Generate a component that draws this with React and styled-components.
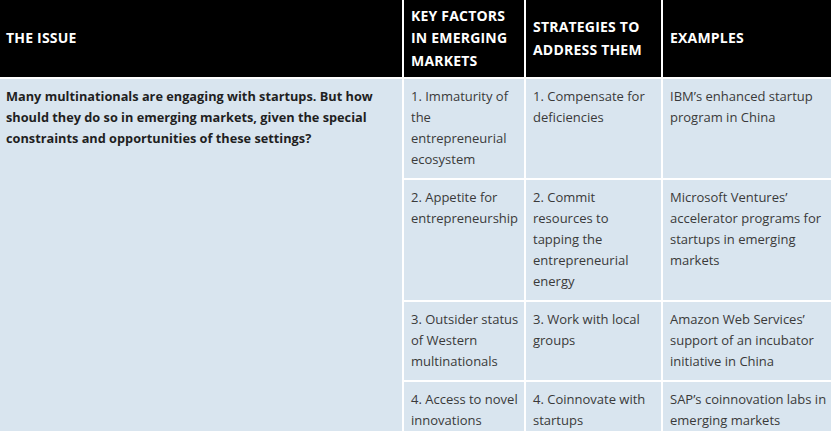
import styled, { createGlobalStyle } from "styled-components";

const GlobalStyle = createGlobalStyle`
  body {
    margin: 0;
    background: #fff;
    font-family: "Open Sans", "Liberation Sans", sans-serif;
  }
`;

const Table = styled.div`
  display: grid;
  grid-template-columns: 402px 120px 135px 1fr;
  gap: 2px;
  background: #fff;
  width: 831px;
`;

const Head = styled.div`
  background: #000;
  color: #fff;
  font-weight: 700;
  font-size: 14px;
  line-height: 22.5px;
  letter-spacing: 0.2px;
  text-transform: uppercase;
  padding: 4px 6px 4px ${(p) => (p.first ? "6px" : "7px")};
  display: flex;
  align-items: center;
  min-height: 69px;
`;

const Cell = styled.div`
  background: #d9e5ef;
  color: #3a3a3a;
  font-size: 13px;
  line-height: 21px;
  padding: 7px 4px 8px 7px;
`;

const IssueCell = styled(Cell)`
  grid-row: span 4;
  font-weight: 700;
  font-size: 12.75px;
  color: #1f1f1f;
  padding-left: 6px;
  padding-right: 20px;
`;

const rows = [
  ["1. Immaturity of the entrepreneurial ecosystem", "1. Compensate for deficiencies", "IBM’s enhanced startup program in China"],
  ["2. Appetite for entrepreneurship", "2. Commit resources to tapping the entrepreneurial energy", "Microsoft Ventures’ accelerator programs for startups in emerging markets"],
  ["3. Outsider status of Western multinationals", "3. Work with local groups", "Amazon Web Services’ support of an incubator initiative in China"],
  ["4. Access to novel innovations", "4. Coinnovate with startups", "SAP’s coinnovation labs in emerging markets"],
];

function App() {
  return (
    <>
      <GlobalStyle />
      <Table>
        <Head first>The issue</Head>
        <Head>Key factors in emerging markets</Head>
        <Head>Strategies to address them</Head>
        <Head>Examples</Head>

        <IssueCell>
          Many multinationals are engaging with startups. But how should they do so in emerging markets, given the special constraints and opportunities of these settings?
        </IssueCell>
        {rows.map((r, i) =>
          r.map((text, j) => <Cell key={i + "-" + j}>{text}</Cell>)
        )}
      </Table>
    </>
  );
}

export default App;
